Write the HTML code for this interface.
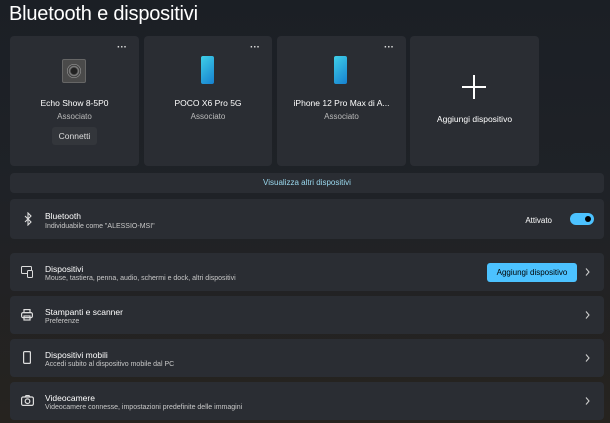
<!DOCTYPE html>
<html><head><meta charset="utf-8"><style>
*{margin:0;padding:0;box-sizing:border-box}
body{width:610px;height:423px;overflow:hidden;font-family:"Liberation Sans",sans-serif;color:#fff;background:linear-gradient(180deg,#1b1f25 0%,#1f2227 45%,#26231f 100%);position:relative}
.abs{position:absolute}
h1{position:absolute;left:9px;top:3px;font-size:20px;font-weight:normal;letter-spacing:-0.2px}
.card{position:absolute;top:36px;height:130px;background:#2a2d33;border-radius:4px;text-align:center}
.dots{position:absolute;right:12px;top:6px;font-size:10px;color:#ddd;font-weight:bold}
.nm{position:absolute;left:0;right:0;top:62px;font-size:8.5px}
.st{position:absolute;left:0;right:0;top:76px;font-size:8px;color:#bbb}
.phone{position:absolute;left:57px;top:20px;width:13px;height:28px;border-radius:2px;background:linear-gradient(135deg,#3fd0e8,#1680d0)}
.bar{position:absolute;left:10px;width:594px;background:#2a2d33;border-radius:4px}
.row .t{position:absolute;left:35px;font-size:8.5px}
.row .s{position:absolute;left:35px;font-size:7px;color:#c8c8c8}
.chev{position:absolute;right:14px}
.ico{position:absolute;left:11px}
</style></head><body>
<h1>Bluetooth e dispositivi</h1>

<div class="card" style="left:10px;width:129px">
<div class="dots">···</div>
<div style="position:absolute;left:52px;top:23px;width:24px;height:24px;background:#4a4a4a;border-radius:2px;border:1px solid #666"><div style="position:absolute;left:4px;top:4px;width:14px;height:14px;border-radius:50%;background:radial-gradient(circle,#222 30%,#888 45%,#333 60%,#aaa 70%,#444 80%)"></div></div>
<div class="nm">Echo Show 8-5P0</div><div class="st">Associato</div>
<div style="position:absolute;left:42px;top:91px;width:45px;height:18px;background:#33363b;border-radius:3px;font-size:8.5px;line-height:18px;color:#ddd">Connetti</div>
</div>
<div class="card" style="left:144px;width:128px"><div class="dots">···</div><div class="phone"></div><div class="nm">POCO X6 Pro 5G</div><div class="st">Associato</div></div>
<div class="card" style="left:277px;width:129px"><div class="dots">···</div><div class="phone"></div><div class="nm">iPhone 12 Pro Max di A...</div><div class="st">Associato</div></div>
<div class="card" style="left:410px;width:129px">
<div style="position:absolute;left:52px;top:50px;width:24px;height:1.5px;background:#fff"></div>
<div style="position:absolute;left:63px;top:39px;width:1.5px;height:24px;background:#fff"></div>
<div class="nm" style="top:78px">Aggiungi dispositivo</div></div>

<div class="bar" style="top:173px;height:20px;font-size:8px;color:#9ad8ee;text-align:center;line-height:20px">Visualizza altri dispositivi</div>

<div class="bar row" style="top:199px;height:40px">
<svg class="ico" style="top:13px;left:14px" width="8" height="14" viewBox="0 0 8 14" fill="none" stroke="#ddd" stroke-width="1.1"><path d="M1 4 L7 10 L4 13 V1 L7 4 L1 10"/></svg>
<div class="t" style="top:12px">Bluetooth</div><div class="s" style="top:24px">Individuabile come "ALESSIO-MSI"</div>
<div class="abs" style="right:52px;top:17px;font-size:8px">Attivato</div>
<div class="abs" style="right:10px;top:14px;width:24px;height:12px;border-radius:6px;background:#4cc2ff"><div style="position:absolute;right:3px;top:3px;width:6px;height:6px;border-radius:50%;background:#000"></div></div>
</div>

<div class="bar row" style="top:253px;height:38px">
<svg class="ico" style="top:13px" width="13" height="12" viewBox="0 0 13 12" fill="none" stroke="#ddd" stroke-width="1"><rect x="0.5" y="0.5" width="10" height="7" rx="1"/><rect x="6.5" y="4.5" width="5" height="7" rx="1" fill="#2a2d33"/></svg>
<div class="t" style="top:11px">Dispositivi</div><div class="s" style="top:22px">Mouse, tastiera, penna, audio, schermi e dock, altri dispositivi</div>
<div class="abs" style="right:27px;top:10px;width:90px;height:19px;background:#4cc2ff;border-radius:3px;color:#000;font-size:8px;text-align:center;line-height:19px">Aggiungi dispositivo</div>
<svg class="chev" style="top:15px" width="5" height="8" viewBox="0 0 5 8" fill="none" stroke="#ccc" stroke-width="1.1"><path d="M1 0.5 L4 4 L1 7.5"/></svg></div>

<div class="bar row" style="top:296px;height:38px">
<svg class="ico" style="top:13px" width="12" height="12" viewBox="0 0 12 12" fill="none" stroke="#ddd" stroke-width="1.2"><rect x="3" y="0.6" width="6" height="3"/><rect x="0.6" y="3.6" width="10.8" height="5" rx="1.5"/><rect x="3" y="7" width="6" height="4"/></svg>
<div class="t" style="top:11px">Stampanti e scanner</div><div class="s" style="top:22px">Preferenze</div>
<svg class="chev" style="top:15px" width="5" height="8" viewBox="0 0 5 8" fill="none" stroke="#ccc" stroke-width="1.1"><path d="M1 0.5 L4 4 L1 7.5"/></svg></div>

<div class="bar row" style="top:339px;height:38px">
<svg class="ico" style="top:12px;left:13px" width="8" height="13" viewBox="0 0 8 13" fill="none" stroke="#ddd" stroke-width="1.2"><rect x="0.6" y="0.6" width="6.8" height="11.8" rx="1"/></svg>
<div class="t" style="top:11px">Dispositivi mobili</div><div class="s" style="top:22px">Accedi subito al dispositivo mobile dal PC</div>
<svg class="chev" style="top:15px" width="5" height="8" viewBox="0 0 5 8" fill="none" stroke="#ccc" stroke-width="1.1"><path d="M1 0.5 L4 4 L1 7.5"/></svg></div>

<div class="bar row" style="top:382px;height:38px">
<svg class="ico" style="top:13px" width="13" height="11" viewBox="0 0 13 11" fill="none" stroke="#ddd" stroke-width="1.2"><rect x="0.6" y="2" width="11.8" height="8.4" rx="1.5"/><circle cx="6.5" cy="6.2" r="2.3"/><path d="M4 2 L5 0.6 H8 L9 2"/></svg>
<div class="t" style="top:11px">Videocamere</div><div class="s" style="top:22px">Videocamere connesse, impostazioni predefinite delle immagini</div>
<svg class="chev" style="top:15px" width="5" height="8" viewBox="0 0 5 8" fill="none" stroke="#ccc" stroke-width="1.1"><path d="M1 0.5 L4 4 L1 7.5"/></svg></div>
</body></html>
